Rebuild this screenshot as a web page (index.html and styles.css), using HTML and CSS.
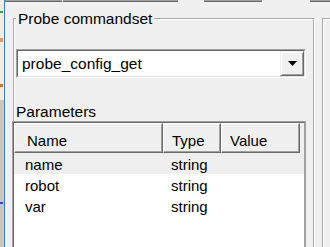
FILE: index.html
```html
<!DOCTYPE html>
<html lang="en">
<head>
    <meta charset="UTF-8">
    <title>Probe commandset</title>
    <link rel="stylesheet" href="styles.css">
</head>
<body>
    <div class="screen">
        <!-- strip of the neighbouring window -->
        <div class="edge"></div>

        <div class="desk">
            <!-- bottoms of the buttons above -->
            <div class="toolbar">
                <span class="tb tb-a"></span>
                <span class="tb tb-b"></span>
                <span class="tb tb-c"></span>
                <span class="tb tb-d"></span>
            </div>

            <div class="panes">
                <fieldset class="group">
                    <legend>Probe commandset</legend>

                    <div class="combo">
                        <div class="combo-inner">
                            <span class="combo-text">probe_config_get</span>
                            <span class="combo-btn">
                                <svg width="9" height="5" viewBox="0 0 9 5"><polygon points="0,0 9,0 4.5,5" fill="#000"/></svg>
                            </span>
                        </div>
                    </div>

                    <div class="label">Parameters</div>

                    <div class="listview">
                        <div class="lv-body">
                            <div class="lv-head">
                                <span class="col col-name">Name</span>
                                <span class="col col-type">Type</span>
                                <span class="col col-value">Value</span>
                            </div>
                            <div class="lv-row selected">
                                <span class="cell cell-name">name</span>
                                <span class="cell cell-type">string</span>
                            </div>
                            <div class="lv-row">
                                <span class="cell cell-name">robot</span>
                                <span class="cell cell-type">string</span>
                            </div>
                            <div class="lv-row">
                                <span class="cell cell-name">var</span>
                                <span class="cell cell-type">string</span>
                            </div>
                        </div>
                    </div>
                </fieldset>

                <fieldset class="group group-next"></fieldset>
            </div>
        </div>
    </div>
</body>
</html>
```

FILE: styles.css
```css
/* General */
body {
    margin: 0;
    background: #f0f0f0;
    font-family: "Liberation Sans", Arial, sans-serif;
    color: #000;
    overflow: hidden;
}

.screen {
    display: flex;
    height: 247px;
    overflow: hidden;
}

/* Left edge: piece of another window */
.edge {
    width: 4px;
    flex: none;
    border-right: 1px solid #3a7fc1;
    background:
        linear-gradient(#3c9b3c, #3c9b3c) 0 11px / 3px 2px no-repeat,
        linear-gradient(#d9a066, #d9a066) 0 38px / 3px 4px no-repeat,
        linear-gradient(#d07a1f, #d07a1f) 0 84px / 3px 3px no-repeat,
        linear-gradient(#2b4fd1, #2b4fd1) 0 202px / 3px 2px no-repeat,
        linear-gradient(to bottom, #ececec 0 100px, #c6c6c6 100px);
}

.desk {
    flex: 1;
    min-width: 0;
    overflow: hidden;
}

/* Button bottoms at the top */
.toolbar {
    display: flex;
    height: 3px;
}

.tb {
    height: 1px;
    background: #a0a0a0;
    border-bottom: 1px solid #696969;
    flex: none;
}

.tb-a { width: 57px; }
.tb-b { width: 115px; margin-left: 1px; }
.tb-c { width: 58px; margin-left: 26px; }
.tb-d { width: 40px; margin-left: 48px; }

/* Group boxes */
.panes {
    display: flex;
    margin-top: 7px;
}

.group {
    box-sizing: border-box;
    width: 302px;
    min-width: 0;
    flex: none;
    margin: 0 0 0 8px;
    padding: 0;
    border: 2px groove #fff;
}

.group legend {
    font-size: 15.5px;
    line-height: 18px;
    padding: 0 2px;
    margin-left: 1px;
}

.group-next {
    width: 40px;
    height: 300px;
    margin: 8px 0 0 7px;
}

/* Combo box */
.combo {
    margin: 21px 7px 0 1px;
    border: 1px solid;
    border-color: #a0a0a0 #fff #fff #a0a0a0;
}

.combo-inner {
    display: flex;
    height: 25px;
    background: #fff;
    border: 1px solid;
    border-color: #696969 #e3e3e3 #e3e3e3 #696969;
}

.combo-text {
    flex: 1;
    padding: 1px 0 0 4px;
    font-size: 15.5px;
    line-height: 24px;
}

.combo-btn {
    box-sizing: border-box;
    width: 24px;
    display: flex;
    align-items: center;
    justify-content: center;
    background: #f0f0f0;
    border: 1px solid;
    border-color: #f0f0f0 #696969 #696969 #f0f0f0;
    box-shadow: inset 1px 1px #fff, inset -1px -1px #a0a0a0;
}

.combo-btn svg {
    display: block;
}

.label {
    margin: 25px 0 0 1px;
    font-size: 15.5px;
    line-height: 18px;
}

/* List view */
.listview {
    margin: 0 7px 0 -3px;
    border: 1px solid #a0a0a0;
}

.lv-body {
    height: 140px;
    background: #fff;
    border: 1px solid;
    border-color: #696969 #a0a0a0 #a0a0a0 #696969;
    font-size: 15px;
}

.lv-head {
    display: flex;
    background: #f0f0f0;
}

.col {
    box-sizing: border-box;
    flex: none;
    padding: 7px 0 1px 8px;
    line-height: 20px;
    border: 1px solid;
    border-color: #fff #696969 #696969 #fff;
    box-shadow: inset -1px -1px #a0a0a0;
}

.col-name { width: 149px; padding-left: 12px; }
.col-type { width: 58px; }
.col-value { width: 79px; }

.lv-row {
    display: flex;
    height: 21px;
}

.lv-row.selected {
    background: #efefef;
}

.cell {
    box-sizing: border-box;
    flex: none;
    padding: 3px 0 0 8px;
    line-height: 18px;
}

.cell-name { width: 149px; padding-left: 11px; }
.cell-type { width: 58px; }
```
